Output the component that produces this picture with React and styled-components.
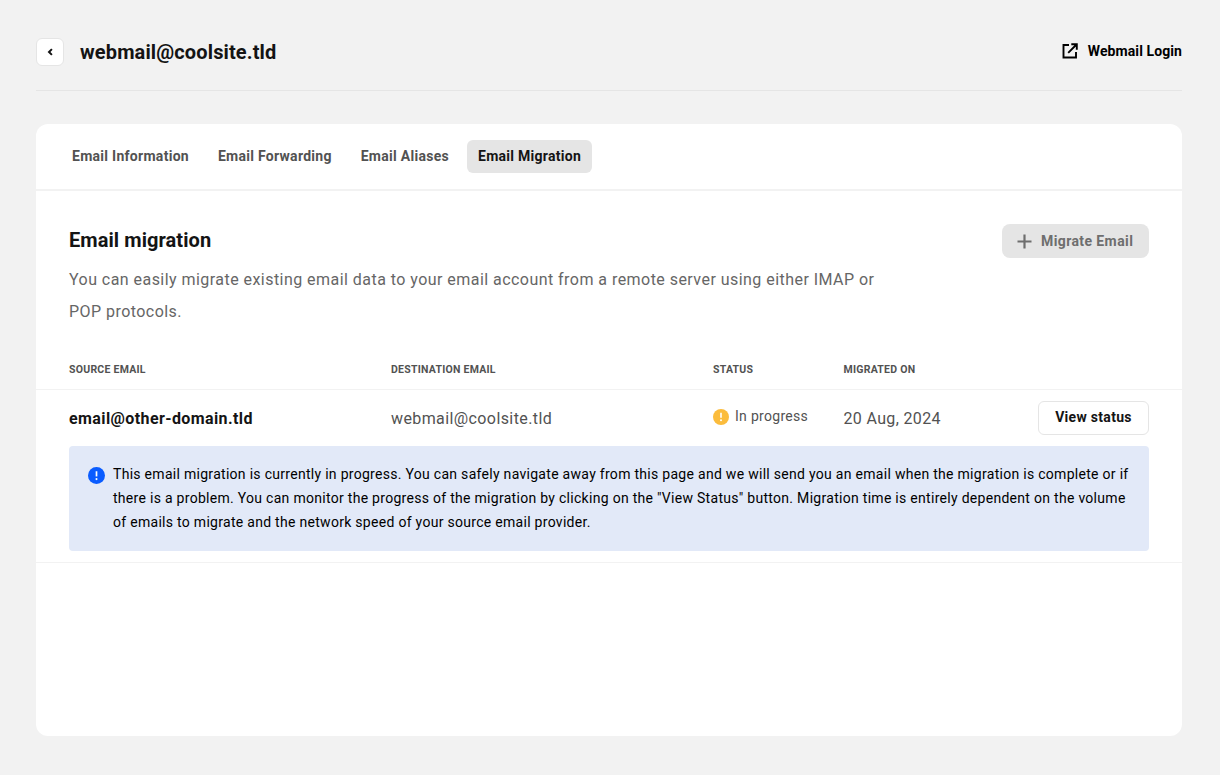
import React from "react";
import styled, { createGlobalStyle } from "styled-components";

const Global = createGlobalStyle`
  html, body { margin: 0; padding: 0; }
  body { background: #f2f2f2; font-family: Roboto, "Liberation Sans", sans-serif; color: #141414; }
  * { box-sizing: border-box; }
`;
const Page = styled.div`
  height: 775px;
  padding: 38px 38px 39px 36px;
  display: flex;
  flex-direction: column;
  overflow: hidden;
`;
const Header = styled.header`
  display: flex;
  align-items: flex-start;
  justify-content: space-between;
  height: 53px;
  border-bottom: 1px solid #e5e5e5;
  margin-bottom: 33px;
`;
const HeaderLeft = styled.div`
  display: flex;
  align-items: center;
  gap: 16px;
`;
const BackButton = styled.button`
  width: 28px;
  height: 28px;
  border: 1px solid #e5e5e5;
  border-radius: 6px;
  background: #fff;
  padding: 0;
  display: flex;
  align-items: center;
  justify-content: center;
`;
const Title = styled.h1`
  margin: 0;
  font-size: 20px;
  line-height: 28px;
  font-weight: 700;
  letter-spacing: 0.13px;
  color: #141414;
`;
const LoginLink = styled.a`
  display: flex;
  align-items: center;
  gap: 10px;
  height: 26px;
  font-size: 14px;
  font-weight: 700;
  letter-spacing: 0.09px;
  color: #000;
`;
const Card = styled.main`
  flex: 1;
  background: #fff;
  border-radius: 12px;
`;
const Tabs = styled.nav`
  display: flex;
  align-items: flex-start;
  height: 67px;
  padding: 16px 0 0 25px;
  border-bottom: 2px solid #f2f2f2;
  gap: 7px;
`;
const Tab = styled.div`
  height: 33px;
  padding: 0 11px;
  border-radius: 6px;
  font-size: 14px;
  font-weight: 700;
  line-height: 33px;
  letter-spacing: 0.28px;
  color: ${(p) => (p.$active ? "#141414" : "#525252")};
  background: ${(p) => (p.$active ? "#e5e5e5" : "transparent")};
`;
const Intro = styled.section`
  display: flex;
  justify-content: space-between;
  align-items: flex-start;
  padding: 32px 33px 0;
`;
const IntroText = styled.div`
  width: 820px;
`;
const Heading = styled.h2`
  margin: 0;
  font-size: 20px;
  line-height: 34px;
  font-weight: 700;
  letter-spacing: 0.07px;
  color: #141414;
`;
const Description = styled.p`
  margin: 7px 0 0;
  font-size: 16px;
  line-height: 32px;
  letter-spacing: 0.455px;
  color: #666;
`;
const MigrateButton = styled.button`
  display: flex;
  align-items: center;
  gap: 9px;
  height: 34px;
  width: 147px;
  margin-top: 1px;
  padding: 0 0 0 15px;
  border: 0;
  border-radius: 8px;
  background: #e5e5e5;
  color: #6e6e6e;
  font: 700 14px Roboto, sans-serif;
  letter-spacing: 0.4px;
`;
const Grid = styled.div`
  display: grid;
  grid-template-columns: 322px 322px 130.5px 1fr;
  padding: 0 33px;
  align-items: center;
`;
const TableHead = styled(Grid)`
  margin-top: 26px;
  height: 36px;
  border-bottom: 1px solid #f2f2f2;
  font-size: 10.5px;
  font-weight: 700;
  letter-spacing: 0.25px;
  color: #525252;
  padding-bottom: 5px;
`;
const RowBlock = styled.div`
  border-bottom: 1px solid #f2f2f2;
  padding-bottom: 11px;
`;
const Row = styled(Grid)`
  height: 56px;
`;
const Source = styled.div`
  font-size: 16px;
  font-weight: 700;
  letter-spacing: 0.4px;
  color: #141414;
`;
const Cell = styled.div`
  font-size: 16px;
  letter-spacing: 0.4px;
  color: #525252;
`;
const DateRow = styled(Cell)`
  display: flex;
  align-items: center;
  justify-content: space-between;
  letter-spacing: 0.35px;
`;
const Status = styled.div`
  display: flex;
  align-items: center;
  gap: 6px;
  font-size: 14px;
  letter-spacing: 0.3px;
  color: #525252;
  margin-top: -3px;
`;
const StatusLabel = styled.span`
  margin-top: -2px;
`;
const ViewButton = styled.button`
  width: 111px;
  height: 34px;
  padding: 0 0 2px;
  border: 1px solid #e5e5e5;
  border-radius: 6px;
  background: #fff;
  color: #141414;
  font: 700 14px Roboto, sans-serif;
  letter-spacing: 0.3px;
`;
const Notice = styled.div`
  margin: 0 33px;
  padding: 16px 18px 14px 19px;
  height: 105px;
  display: flex;
  gap: 8px;
  border-radius: 4px;
  background: #e2e9f8;
  font-size: 14px;
  line-height: 24px;
  letter-spacing: 0.29px;
  color: #000;
`;
const NoticeIcon = styled.svg`
  flex: none;
  width: 17px;
  height: 17px;
  margin-top: 5px;
`;

const Chevron = () => (
  <svg width="10" height="10" viewBox="0 0 10 10">
    <path d="M6.9 2.1 4 5l2.9 2.9" fill="none" stroke="#141414" strokeWidth="2" />
  </svg>
);
const External = () => (
  <svg width="16" height="16" viewBox="0 0 16 16" fill="none" stroke="#000" strokeWidth="1.9">
    <path d="M7 2H1.5v12.5H14V9" />
    <path d="M6.2 9.8 14 2M9.3 1.2h5.5v5.5" />
  </svg>
);
const Plus = () => (
  <svg width="15" height="15" viewBox="0 0 15 15">
    <path d="M7.5 0.5v14M.5 7.5h14" stroke="#6e6e6e" strokeWidth="2.2" />
  </svg>
);
const Warn = () => (
  <svg width="16" height="16" viewBox="0 0 16 16">
    <circle cx="8" cy="8" r="8" fill="#fbbc3c" />
    <path d="M8 3.8v5" stroke="#fff" strokeWidth="1.6" />
    <circle cx="8" cy="11.2" r="1" fill="#fff" />
  </svg>
);

export default function App() {
  return (
    <Page>
      <Global />
      <Header>
        <HeaderLeft>
          <BackButton aria-label="Back"><Chevron /></BackButton>
          <Title>webmail@coolsite.tld</Title>
        </HeaderLeft>
        <LoginLink><External />Webmail Login</LoginLink>
      </Header>
      <Card>
        <Tabs>
          <Tab>Email Information</Tab>
          <Tab>Email Forwarding</Tab>
          <Tab>Email Aliases</Tab>
          <Tab $active>Email Migration</Tab>
        </Tabs>
        <Intro>
          <IntroText>
            <Heading>Email migration</Heading>
            <Description>
              You can easily migrate existing email data to your email account from a remote server using either IMAP or POP protocols.
            </Description>
          </IntroText>
          <MigrateButton><Plus />Migrate Email</MigrateButton>
        </Intro>
        <TableHead>
          <div>SOURCE EMAIL</div>
          <div>DESTINATION EMAIL</div>
          <div>STATUS</div>
          <div>MIGRATED ON</div>
        </TableHead>
        <RowBlock>
          <Row>
            <Source>email@other-domain.tld</Source>
            <Cell>webmail@coolsite.tld</Cell>
            <Status><Warn /><StatusLabel>In progress</StatusLabel></Status>
            <DateRow>20 Aug, 2024<ViewButton>View status</ViewButton></DateRow>
          </Row>
          <Notice>
            <NoticeIcon viewBox="0 0 18 18">
              <circle cx="9" cy="9" r="9" fill="#0a5cff" />
              <path d="M9 4.5v5.5" stroke="#fff" strokeWidth="1.8" />
              <circle cx="9" cy="12.8" r="1.1" fill="#fff" />
            </NoticeIcon>
            <div>
              This email migration is currently in progress. You can safely navigate away from this page and we will send you an email when the migration is complete or if there is a problem. You can monitor the progress of the migration by clicking on the "View Status" button. Migration time is entirely dependent on the volume of emails to migrate and the network speed of your source email provider.
            </div>
          </Notice>
        </RowBlock>
      </Card>
    </Page>
  );
}
